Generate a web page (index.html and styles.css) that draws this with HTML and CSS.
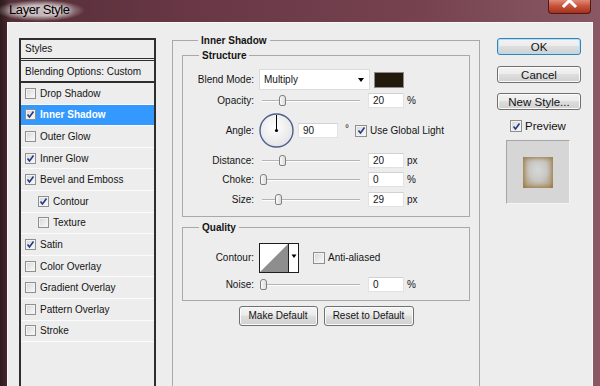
FILE: index.html
```html
<!DOCTYPE html>
<html lang="en">
<head>
    <meta charset="UTF-8">
    <meta name="viewport" content="width=device-width, initial-scale=1.0">
    <title>Layer Style</title>
    <link rel="stylesheet" href="styles.css">
</head>
<body>
<div class="window">
    <div class="titlebar">
        <span class="titlebar__text">Layer Style</span>
        <div class="titlebar__close">
            <svg width="17" height="9" viewBox="0 7 17 9"><path d="M3 2 L14 13 M14 2 L3 13" stroke="#fff" stroke-width="3" stroke-linecap="square"/></svg>
        </div>
    </div>

    <div class="client">
        <div class="styles-list">
            <div class="styles-list__head">Styles</div>
            <div class="styles-list__blend">Blending Options: Custom</div>
            <div class="styles-list__item"><span class="cb"></span>Drop Shadow</div>
            <div class="styles-list__item styles-list__item_active"><span class="cb cb_on"><svg viewBox="0 0 9 9"><polyline points="1.5,4.5 3.5,7 7.5,1.5"/></svg></span>Inner Shadow</div>
            <div class="styles-list__item"><span class="cb"></span>Outer Glow</div>
            <div class="styles-list__item"><span class="cb cb_on"><svg viewBox="0 0 9 9"><polyline points="1.5,4.5 3.5,7 7.5,1.5"/></svg></span>Inner Glow</div>
            <div class="styles-list__item"><span class="cb cb_on"><svg viewBox="0 0 9 9"><polyline points="1.5,4.5 3.5,7 7.5,1.5"/></svg></span>Bevel and Emboss</div>
            <div class="styles-list__item styles-list__item_sub"><span class="cb cb_on"><svg viewBox="0 0 9 9"><polyline points="1.5,4.5 3.5,7 7.5,1.5"/></svg></span>Contour</div>
            <div class="styles-list__item styles-list__item_sub"><span class="cb"></span>Texture</div>
            <div class="styles-list__item"><span class="cb cb_on"><svg viewBox="0 0 9 9"><polyline points="1.5,4.5 3.5,7 7.5,1.5"/></svg></span>Satin</div>
            <div class="styles-list__item"><span class="cb"></span>Color Overlay</div>
            <div class="styles-list__item"><span class="cb"></span>Gradient Overlay</div>
            <div class="styles-list__item"><span class="cb"></span>Pattern Overlay</div>
            <div class="styles-list__item"><span class="cb"></span>Stroke</div>
        </div>

        <fieldset class="group group_main">
            <legend>Inner Shadow</legend>

            <fieldset class="group group_structure">
                <legend>Structure</legend>
                <div class="row row_blend">
                    <div class="row__label">Blend Mode:</div>
                    <div class="select">Multiply<span class="select__arrow"></span></div>
                    <div class="swatch"></div>
                </div>
                <div class="row row_slider row_opacity">
                    <div class="row__label">Opacity:</div>
                    <div class="slider"><div class="slider__track"></div><div class="slider__thumb" style="left:20px"></div></div>
                    <input class="field" type="text" value="20">
                    <div class="unit">%</div>
                </div>
                <div class="row row_angle">
                    <div class="row__label">Angle:</div>
                    <svg class="dial" width="35" height="35" viewBox="0 0 35 35">
                        <defs>
                            <radialGradient id="dialFill" cx="45%" cy="40%" r="60%">
                                <stop offset="0" stop-color="#ffffff"/>
                                <stop offset="1" stop-color="#e4e4e6"/>
                            </radialGradient>
                        </defs>
                        <circle cx="17.5" cy="17.5" r="16.5" fill="url(#dialFill)" stroke="#4e5f8c" stroke-width="1.4"/>
                        <line x1="17.5" y1="17.5" x2="17.5" y2="2" stroke="#000" stroke-width="1"/>
                        <circle cx="17.5" cy="17.5" r="1.6" fill="#000"/>
                    </svg>
                    <input class="field field_angle" type="text" value="90">
                    <div class="unit unit_deg">°</div>
                    <span class="cb cb_big cb_on"><svg viewBox="0 0 9 9"><polyline points="1.5,4.5 3.5,7 7.5,1.5"/></svg></span>
                    <div class="cb-label">Use Global Light</div>
                </div>
                <div class="row row_slider row_distance">
                    <div class="row__label">Distance:</div>
                    <div class="slider"><div class="slider__track"></div><div class="slider__thumb" style="left:20px"></div></div>
                    <input class="field" type="text" value="20">
                    <div class="unit">px</div>
                </div>
                <div class="row row_slider row_choke">
                    <div class="row__label">Choke:</div>
                    <div class="slider"><div class="slider__track"></div><div class="slider__thumb" style="left:1px"></div></div>
                    <input class="field" type="text" value="0">
                    <div class="unit">%</div>
                </div>
                <div class="row row_slider row_size">
                    <div class="row__label">Size:</div>
                    <div class="slider"><div class="slider__track"></div><div class="slider__thumb" style="left:16px"></div></div>
                    <input class="field" type="text" value="29">
                    <div class="unit">px</div>
                </div>
            </fieldset>

            <fieldset class="group group_quality">
                <legend>Quality</legend>
                <div class="row row_contour">
                    <div class="row__label">Contour:</div>
                    <svg class="contour" width="40" height="30" viewBox="0 0 40 30">
                        <rect x="0.5" y="0.5" width="39" height="29" fill="#fff" stroke="#1e1e1e"/>
                        <polygon points="1,29 29,1 29,29" fill="#8e8e8e"/>
                        <line x1="29.5" y1="0.5" x2="29.5" y2="29.5" stroke="#1e1e1e"/>
                        <polygon points="32.5,11.5 37.5,11.5 35,15" fill="#000"/>
                    </svg>
                    <span class="cb cb_big"></span>
                    <div class="cb-label">Anti-aliased</div>
                </div>
                <div class="row row_slider row_noise">
                    <div class="row__label">Noise:</div>
                    <div class="slider"><div class="slider__track"></div><div class="slider__thumb" style="left:1px"></div></div>
                    <input class="field" type="text" value="0">
                    <div class="unit">%</div>
                </div>
            </fieldset>

            <div class="defaults">
                <button class="btn btn_make" type="button">Make Default</button>
                <button class="btn btn_reset" type="button">Reset to Default</button>
            </div>
        </fieldset>

        <div class="side">
            <button class="btn btn_side btn_default" type="submit">OK</button>
            <button class="btn btn_side btn_cancel" type="button">Cancel</button>
            <button class="btn btn_side btn_new" type="button">New Style...</button>
            <div class="preview">
                <span class="cb cb_big cb_on"><svg viewBox="0 0 9 9"><polyline points="1.5,4.5 3.5,7 7.5,1.5"/></svg></span>
                <div class="preview__label">Preview</div>
            </div>
            <div class="preview-box">
                <div class="preview-box__swatch"></div>
            </div>
        </div>
    </div>
</div>
</body>
</html>
```

FILE: styles.css
```css
* {
    box-sizing: border-box;
}
body {
    margin: 0;
    font-family: "Liberation Sans", Arial, sans-serif;
    font-size: 10px;
    color: #141414;
}
.window {
    width: 600px;
    height: 386px;
    overflow: hidden;
    padding: 0 7px;
    display: flex;
    flex-direction: column;
    background: linear-gradient(90deg, #2e1b1e 0, #553038 2%, #683645 30%, #764250 70%, #8a5865 100%);
}
.titlebar {
    flex: none;
    height: 22px;
    display: flex;
    justify-content: space-between;
    align-items: flex-start;
}
.titlebar__text {
    margin: 0 0 0 -10px;
    padding: 2px 14px 4px 12px;
    font-size: 13px;
    line-height: 15px;
    letter-spacing: -0.4px;
    color: #000;
    background: radial-gradient(ellipse at center, rgba(205, 192, 195, 0.9) 35%, rgba(205, 192, 195, 0) 72%);
    text-shadow: 0 0 5px rgba(255, 255, 255, 0.9);
}
.titlebar__close {
    width: 43px;
    height: 14px;
    margin-right: 2px;
    border: 1px solid #4f1a14;
    border-top: 0;
    border-radius: 0 0 4px 4px;
    background: linear-gradient(#e08a78, #c8543c 45%, #a7301b 100%);
    display: flex;
    justify-content: center;
}
.client {
    flex: 1;
    display: flex;
    align-items: flex-start;
    padding-left: 11px;
    background: #ededed;
    border: 1px solid #f8f8f8;
    border-bottom: 0;
}

/* styles list */
.styles-list {
    flex: none;
    width: 137px;
    height: 400px;
    margin-top: 15px;
    border: 2px solid #2e2e2e;
}
.styles-list__head {
    height: 19px;
    line-height: 18px;
    padding-left: 4px;
    border-bottom: 1px solid #2e2e2e;
    margin-bottom: 1px;
}
.styles-list__blend {
    height: 23px;
    line-height: 21px;
    padding-left: 4px;
    border-top: 1px solid #2e2e2e;
    border-bottom: 2px solid #2e2e2e;
}
.styles-list__item {
    height: 21.6px;
    display: flex;
    align-items: center;
    padding-left: 4px;
    border-bottom: 1px solid #fbfbfb;
}
.styles-list__item_sub {
    padding-left: 17px;
}
.styles-list__item_active {
    background: #3399ff;
    color: #fff;
    font-weight: bold;
}
.cb {
    flex: none;
    width: 11px;
    height: 11px;
    margin-right: 4px;
    border: 1px solid #8e8f8f;
    background: linear-gradient(135deg, #d6d6d6, #fbfbfb);
    box-shadow: inset 0 0 0 1px #f2f2f2;
    display: flex;
    align-items: center;
    justify-content: center;
}
.cb svg {
    width: 9px;
    height: 9px;
}
.cb polyline {
    fill: none;
    stroke: #22398a;
    stroke-width: 1.6;
}
.cb_big {
    width: 12px;
    height: 12px;
    margin-right: 3px;
}

/* group boxes */
.group {
    margin: 0;
    min-width: 0;
    border: 1px solid #a9a9a9;
}
.group legend {
    margin-left: 16px;
    padding: 0 3px;
    font-weight: bold;
    line-height: 13px;
}
.group_main {
    flex: none;
    width: 308px;
    height: 400px;
    margin: 10.5px 0 0 16px;
    padding: 0 9px;
}
.group_structure {
    margin-top: 2px;
    padding: 0 0 9px 0;
}
.group_quality {
    margin-top: 4.5px;
    padding: 0 0 8px 0;
}
.row {
    display: flex;
    align-items: center;
}
.row__label {
    flex: none;
    width: 71px;
    margin-right: 5px;
    text-align: right;
}
.row_blend {
    height: 21px;
    margin-top: 7.5px;
}
.row_opacity {
    margin-top: 3px;
}
.row_angle {
    height: 35px;
    margin-top: 5px;
}
.row_distance {
    margin-top: 5px;
}
.row_choke {
    margin-top: 4px;
}
.row_size {
    margin-top: 4.5px;
}
.row_contour {
    height: 30px;
    margin-top: 8.5px;
}
.row_noise {
    margin-top: 4px;
}
.row_slider {
    height: 15px;
}
.select {
    width: 111px;
    height: 21px;
    margin-right: 4px;
    padding: 0 5px 0 4px;
    display: flex;
    align-items: center;
    justify-content: space-between;
    background: #fff;
    border: 1px solid #dcdcdc;
}
.select__arrow {
    width: 0;
    height: 0;
    border-left: 3.5px solid transparent;
    border-right: 3.5px solid transparent;
    border-top: 4px solid #000;
    margin-top: 1px;
}
.swatch {
    width: 30px;
    height: 16px;
    border: 1px solid #8c8c8c;
    background: #231a0d;
}
.slider {
    position: relative;
    flex: none;
    width: 105px;
    height: 15px;
    margin-right: 4px;
}
.slider__track {
    position: absolute;
    left: 3px;
    right: 4px;
    top: 7px;
    height: 2px;
    border-top: 1px solid #b4b4b4;
    border-bottom: 1px solid #fdfdfd;
}
.slider__thumb {
    position: absolute;
    top: 2px;
    width: 7px;
    height: 11px;
    border: 1px solid #808080;
    border-radius: 3px 3px 2px 2px;
    background: linear-gradient(90deg, #fafafa, #dcdcdc);
}
.field {
    flex: none;
    width: 36px;
    height: 15px;
    padding: 0 0 0 4px;
    font-family: inherit;
    font-size: 10px;
    color: #141414;
    background: #fff;
    border: 1px solid #e2e2e2;
    border-top-color: #d2d2d2;
    outline: none;
}
.field_angle {
    width: 40px;
}
.dial {
    flex: none;
    margin-right: 4px;
}
.unit {
    margin-left: 3px;
}
.unit_deg {
    margin: 0 6px 0 7px;
    align-self: flex-start;
    margin-top: 10px;
}
.cb-label {
    white-space: nowrap;
}
.contour {
    flex: none;
    margin-right: 14px;
}
.defaults {
    margin-top: 5px;
    display: flex;
    justify-content: center;
    gap: 6px;
}

/* buttons */
.btn {
    height: 20px;
    padding: 0;
    font-family: inherit;
    font-size: 10px;
    color: #141414;
    border: 1px solid #707070;
    border-radius: 3px;
    background: linear-gradient(#f3f3f3 0%, #ececec 45%, #dedede 50%, #d0d0d0 100%);
    box-shadow: inset 0 0 0 1px #fbfbfb;
}
.btn_make {
    width: 79px;
}
.btn_reset {
    width: 90px;
}
.side {
    flex: none;
    width: 84px;
    margin: 15px 0 0 17px;
    display: flex;
    flex-direction: column;
}
.btn_side {
    height: 17px;
    font-size: 11.5px;
    line-height: 14px;
}
.btn_default {
    border-color: #3c7fb1;
    box-shadow: inset 0 0 0 1px #a6e2fb;
}
.btn_cancel {
    margin-top: 11px;
}
.btn_new {
    margin-top: 10px;
}
.preview {
    margin: 10px 0 0 13px;
    display: flex;
    align-items: center;
    font-size: 11.5px;
}
.preview-box {
    width: 64px;
    height: 64px;
    margin: 8px 0 0 9px;
    display: flex;
    align-items: center;
    justify-content: center;
    background: #d6d6d6;
    border: 1px solid #f4f4f4;
    border-top-color: #a6a6a6;
    border-left-color: #a6a6a6;
}
.preview-box__swatch {
    width: 30px;
    height: 31px;
    background: radial-gradient(ellipse at 50% 42%, #d6d7d9 0%, #c9c8c4 40%, #b4a283 80%, #9c7f4f 100%);
    box-shadow: inset 0 0 4px 1px #9a7c4a;
}
```
